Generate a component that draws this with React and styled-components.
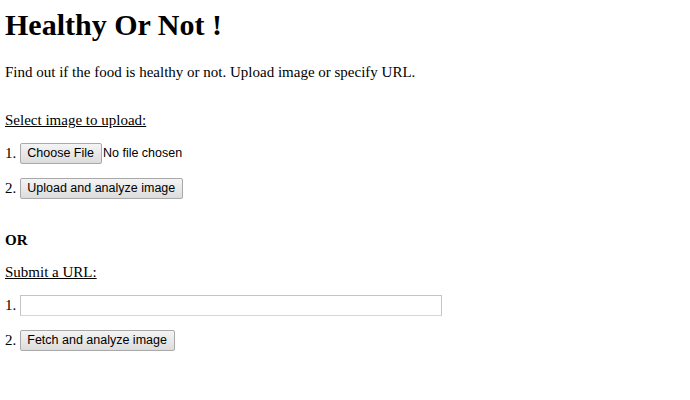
import React from "react";
import styled, { createGlobalStyle } from "styled-components";

const Global = createGlobalStyle`
  html, body { margin: 0; padding: 0; background: #fff; }
  body {
    padding: 0 5px;
    font-family: "Liberation Serif", "Times New Roman", serif;
    font-size: 15px;
    color: #000;
  }
`;

const Page = styled.main`
  display: flex;
  flex-direction: column;
  padding-top: 6px;
`;

const Title = styled.h1`
  margin: 0;
  font-size: 30px;
  font-weight: bold;
  line-height: 37px;
`;

const Intro = styled.p`
  margin: 20px 0 0;
  line-height: 18px;
`;

const SectionLabel = styled.p`
  margin: ${(p) => p.$top}px 0 0;
  line-height: 18px;
  text-decoration: underline;
`;

const Or = styled.p`
  margin: 32px 0 0;
  line-height: 18px;
  font-weight: bold;
`;

const Row = styled.div`
  display: flex;
  align-items: center;
  gap: 4px;
  margin-top: ${(p) => p.$top}px;
  height: 22px;
`;

const Num = styled.span`
  line-height: 18px;
`;

const Button = styled.button`
  font-family: "Liberation Sans", Arial, sans-serif;
  font-size: 12.5px;
  color: #000;
  height: 21px;
  padding: 0 7px 0 6px;
  border: 1px solid #a9a9a9;
  border-radius: 2px;
  background: linear-gradient(#f4f4f4, #e6e6e6 60%, #dcdcdc);
  line-height: 19px;
  cursor: default;
`;

const FileLabel = styled.span`
  font-family: "Liberation Sans", Arial, sans-serif;
  font-size: 12.5px;
  margin-left: -3px;
`;

const UrlInput = styled.input`
  width: 422px;
  height: 21px;
  box-sizing: border-box;
  border: 1px solid #c4c4c4;
  border-bottom-color: #d6d6d6;
  padding: 1px 2px;
  font-family: "Liberation Sans", Arial, sans-serif;
  font-size: 12.5px;
  outline: none;
`;

export default function App() {
  return (
    <>
      <Global />
      <Page>
        <Title>Healthy Or Not !</Title>
        <Intro>Find out if the food is healthy or not. Upload image or specify URL.</Intro>
        <SectionLabel $top={30}>Select image to upload:</SectionLabel>
        <Row $top={13}>
          <Num>1.</Num>
          <Button type="button">Choose File</Button>
          <FileLabel>No file chosen</FileLabel>
        </Row>
        <Row $top={13}>
          <Num>2.</Num>
          <Button type="button">Upload and analyze image</Button>
        </Row>
        <Or>OR</Or>
        <SectionLabel $top={14}>Submit a URL:</SectionLabel>
        <Row $top={13}>
          <Num>1.</Num>
          <UrlInput type="text" />
        </Row>
        <Row $top={13}>
          <Num>2.</Num>
          <Button type="button">Fetch and analyze image</Button>
        </Row>
      </Page>
    </>
  );
}
